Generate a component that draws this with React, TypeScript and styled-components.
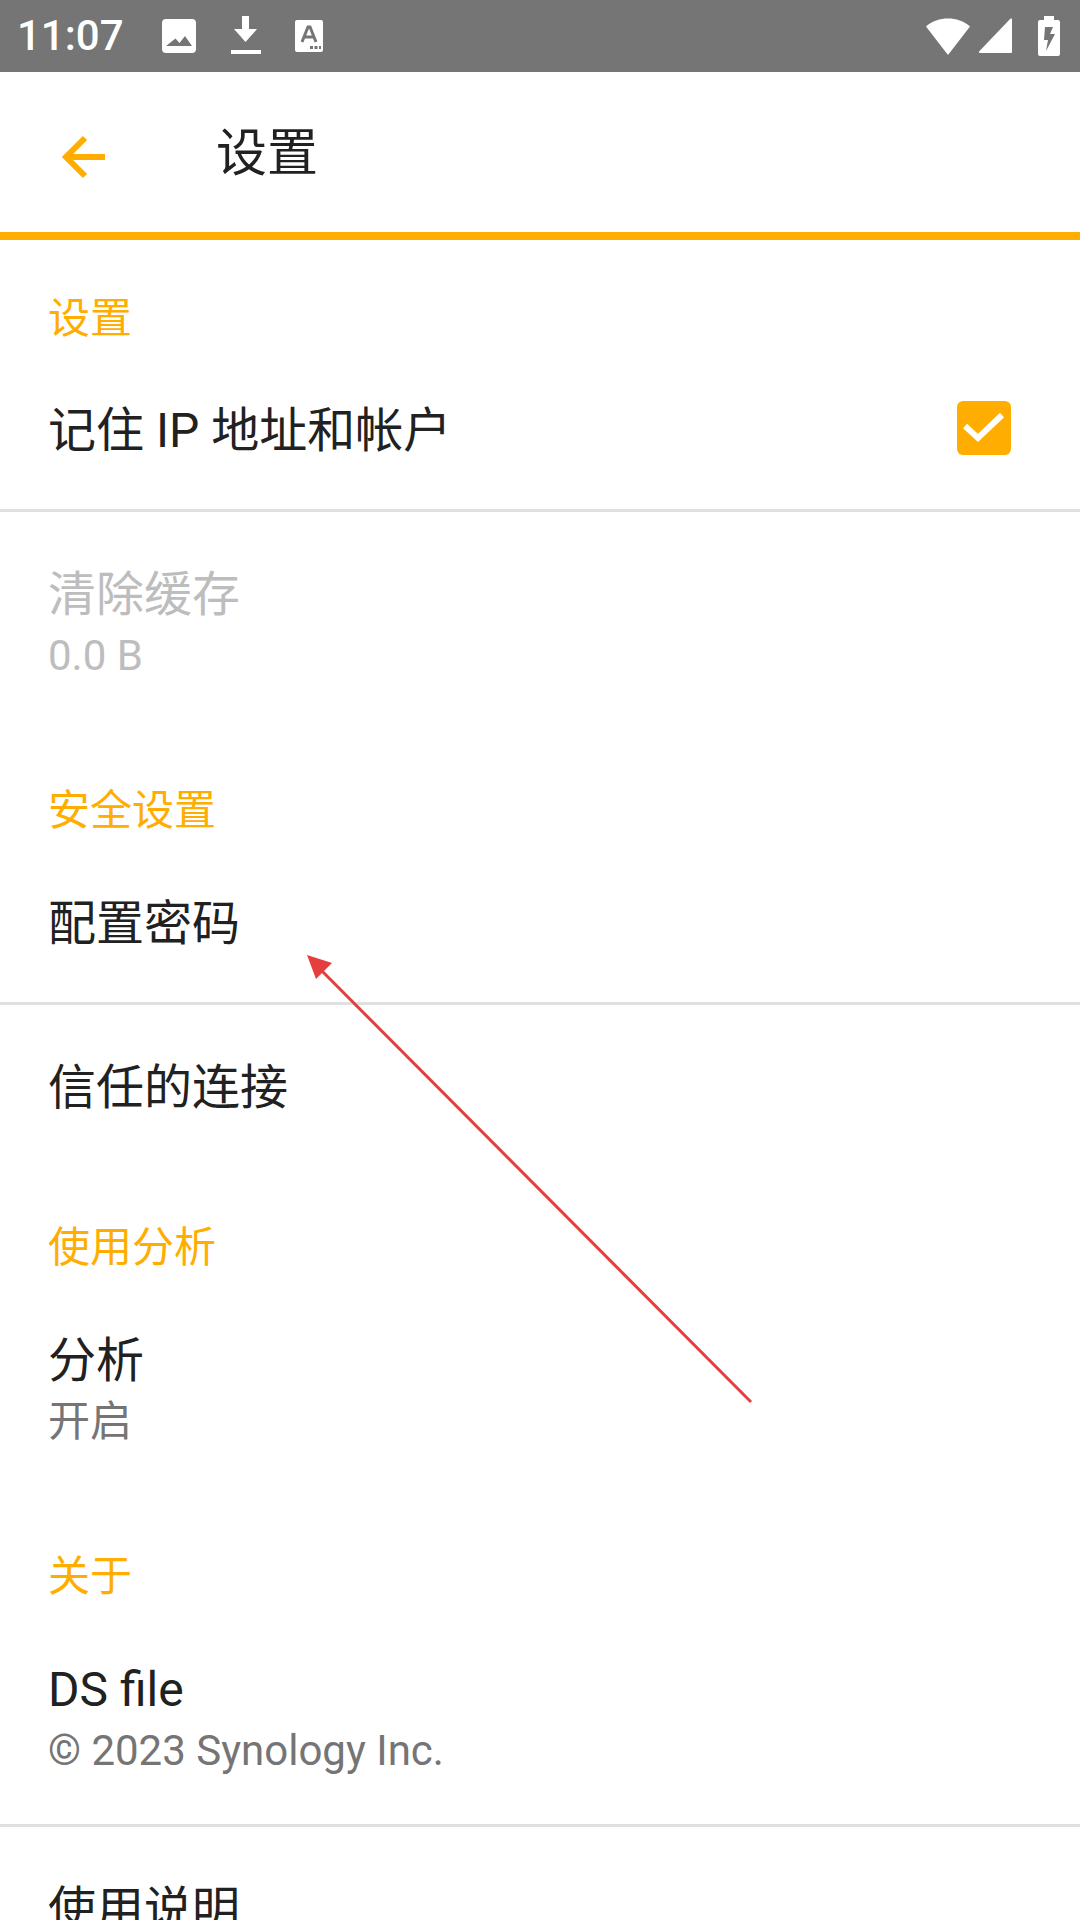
import React from "react";
import styled, { createGlobalStyle } from "styled-components";

const GlobalStyle = createGlobalStyle`
  html, body {
    margin: 0;
    padding: 0;
    background: #fff;
  }
  body {
    font-family: Roboto, "Noto Sans CJK SC", sans-serif;
  }
`;

export default function App() {
  return (
    <Page>
      <GlobalStyle />
      <StatusBar>
        <Time>11:07</Time>
        <NoticeIcons>
          <svg width="36" height="36" viewBox="0 0 36 36">
            <path
              fill="#fff"
              fillRule="evenodd"
              d="M5 1h26a4 4 0 0 1 4 4v26a4 4 0 0 1-4 4H5a4 4 0 0 1-4-4V5a4 4 0 0 1 4-4zM5 28h26l-7-10-5.500 7-4-4.500z"
            />
          </svg>
          <svg width="32" height="42" viewBox="0 0 32 42">
            <path fill="#fff" d="M12 1h7v13h8L15.500 27 4 14h8zM1 35h30v4H1z" />
          </svg>
          <svg width="28" height="32" viewBox="0 0 28 32">
            <path
              fill="#fff"
              d="M2 0h24a2 2 0 0 1 2 2v28a2 2 0 0 1-2 2H2a2 2 0 0 1-2-2V2a2 2 0 0 1 2-2z"
            />
            <path
              fill="none"
              stroke="#757575"
              strokeWidth="3"
              d="M7 22l6-15h2l6 15M9 17h10"
            />
            <path fill="#757575" d="M15 26h3v3h-3zM19.500 26h3v3h-3zM24 26h2v3h-2z" />
          </svg>
        </NoticeIcons>
        <SystemIcons>
          <svg width="46" height="37" viewBox="0 0 46 37">
            <path
              fill="#fff"
              d="M1 8.500C7 3 15 0.500 23 0.500S39 3 45 8.500L23.800 36a1 1 0 0 1-1.600 0z"
            />
          </svg>
          <svg width="36" height="36" viewBox="0 0 36 36">
            <path
              fill="#fff"
              d="M34 1.500V34a1 1 0 0 1-1 1H2a1 1 0 0 1-.7-1.700L32.300 0.800a1 1 0 0 1 1.700.7z"
            />
          </svg>
          <BatteryIcon width="22" height="40" viewBox="0 0 22 40">
            <path
              fill="#fff"
              fillRule="evenodd"
              d="M6 0h10v4h4a2 2 0 0 1 2 2v32a2 2 0 0 1-2 2H2a2 2 0 0 1-2-2V6a2 2 0 0 1 2-2h4zM7 11l-1 13h4l-2 11 9-17h-5l3-7z"
            />
          </BatteryIcon>
        </SystemIcons>
      </StatusBar>

      <Toolbar>
        <BackButton>
          <svg width="44" height="44" viewBox="0 0 44 44">
            <path
              fill="none"
              stroke="#ffad00"
              strokeWidth="6"
              d="M43 22H6M23 3L4 22l19 19"
            />
          </svg>
        </BackButton>
        <ToolbarTitle>设置</ToolbarTitle>
      </Toolbar>

      <SectionTitle $first>设置</SectionTitle>
      <Row $divider>
        <RowText>
          <RowTitle>记住 IP 地址和帐户</RowTitle>
        </RowText>
        <CheckBox>
          <svg width="42" height="30" viewBox="0 0 42 30">
            <path fill="none" stroke="#fff" strokeWidth="6" d="M2 13l13 12L39 2" />
          </svg>
        </CheckBox>
      </Row>
      <Row $tall>
        <RowText>
          <RowTitle $disabled>清除缓存</RowTitle>
          <RowSub $disabled>0.0 B</RowSub>
        </RowText>
      </Row>

      <SectionTitle>安全设置</SectionTitle>
      <Row $divider>
        <RowText>
          <RowTitle>配置密码</RowTitle>
        </RowText>
      </Row>
      <Row>
        <RowText>
          <RowTitle>信任的连接</RowTitle>
        </RowText>
      </Row>

      <SectionTitle>使用分析</SectionTitle>
      <Row $tall>
        <RowText>
          <RowTitle>分析</RowTitle>
          <RowSub>开启</RowSub>
        </RowText>
      </Row>

      <SectionTitle>关于</SectionTitle>
      <Row $tall $divider>
        <RowText>
          <RowTitle>DS file</RowTitle>
          <RowSub>© 2023 Synology Inc.</RowSub>
        </RowText>
      </Row>
      <Row>
        <RowText>
          <RowTitle>使用说明</RowTitle>
        </RowText>
      </Row>

      <Annotation width="1080" height="1920" viewBox="0 0 1080 1920">
        <path fill="none" stroke="#e53e3e" strokeWidth="3" d="M751 1402L318 967" />
        <path fill="#e53e3e" d="M307 955l25 8-16 16z" />
      </Annotation>
    </Page>
  );
}

const Page = styled.div`
  position: relative;
  width: 1080px;
  height: 1920px;
  overflow: hidden;
  background: #fff;
`;

const StatusBar = styled.div`
  display: flex;
  align-items: center;
  height: 72px;
  padding: 0 20px 0 17px;
  box-sizing: border-box;
  background: #757575;
`;

const Time = styled.span`
  color: #fff;
  font-size: 42px;
  font-weight: 500;
  line-height: 72px;
`;

const NoticeIcons = styled.div`
  display: flex;
  align-items: center;
  gap: 33px;
  margin-left: 37px;
`;

const SystemIcons = styled.div`
  display: flex;
  align-items: center;
  gap: 7px;
  margin-left: auto;
`;

const BatteryIcon = styled.svg`
  margin-left: 17px;
`;

const Toolbar = styled.div`
  display: flex;
  align-items: center;
  height: 168px;
  box-sizing: border-box;
  border-bottom: 8px solid #ffad00;
`;

const BackButton = styled.div`
  display: flex;
  width: 216px;
  padding: 9px 0 0 62px;
  box-sizing: border-box;
`;

const ToolbarTitle = styled.div`
  padding-top: 4px;
  color: #212121;
  font-size: 51px;
  line-height: 60px;
`;

const SectionTitle = styled.div<{ $first?: boolean }>`
  padding: ${(p) => (p.$first ? "58px 48px 8px" : "61px 48px 9px")};
  color: #ffad00;
  font-size: 42px;
  line-height: 42px;
`;

const Row = styled.div<{ $divider?: boolean; $tall?: boolean }>`
  display: flex;
  justify-content: space-between;
  height: ${(p) => (p.$tall ? 165 : 109)}px;
  padding: 52px 69px 0 48px;
  border-bottom: ${(p) => (p.$divider ? "3px solid #e0e0e0" : "none")};
`;

const RowText = styled.div`
  display: flex;
  flex-direction: column;
`;

const RowTitle = styled.div<{ $disabled?: boolean }>`
  color: ${(p) => (p.$disabled ? "#bdbdbd" : "#212121")};
  font-size: 48px;
  line-height: 62px;
`;

const RowSub = styled.div<{ $disabled?: boolean }>`
  color: ${(p) => (p.$disabled ? "#bdbdbd" : "#757575")};
  font-size: 42px;
  line-height: 59px;
`;

const CheckBox = styled.div`
  display: flex;
  align-items: center;
  justify-content: center;
  width: 54px;
  height: 54px;
  margin-top: 1px;
  border-radius: 6px;
  background: #ffad00;
`;

const Annotation = styled.svg`
  position: absolute;
  top: 0;
  left: 0;
  pointer-events: none;
`;
